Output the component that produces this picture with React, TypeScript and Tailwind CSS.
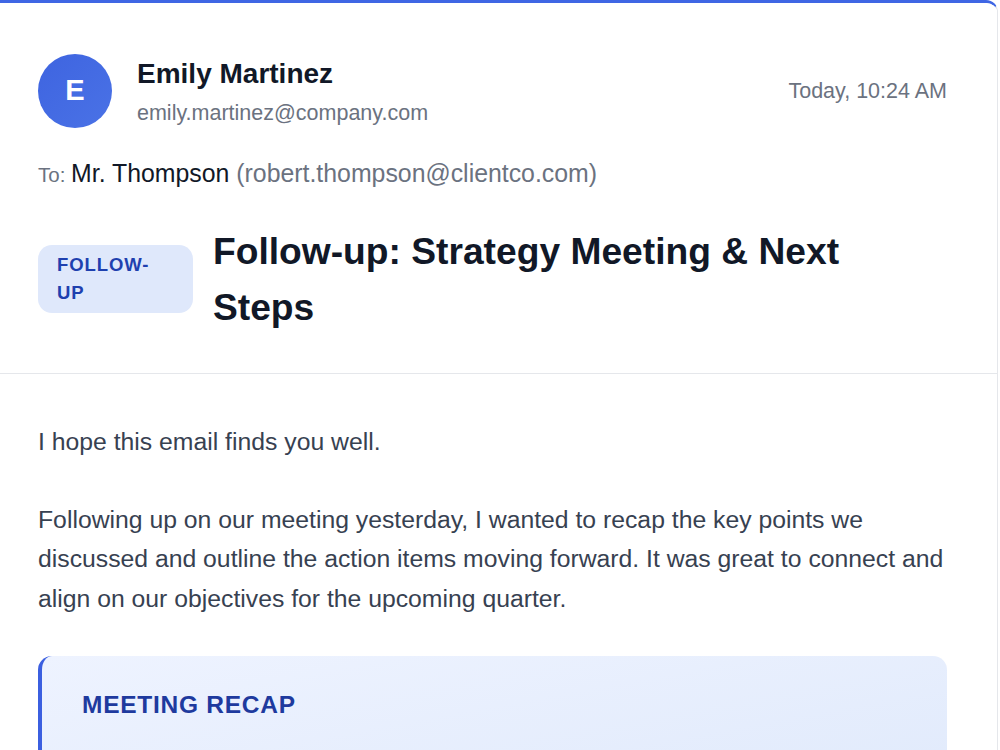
const font = { fontFamily: '"Liberation Sans", Arial, Helvetica, sans-serif' };

function Avatar({ letter }: { letter: string }) {
  return (
    <div className="w-[74px] h-[74px] shrink-0 rounded-full bg-gradient-to-br from-[#3e64e0] to-[#4a72e6] flex items-center justify-center text-white text-[29px] font-bold">
      {letter}
    </div>
  );
}

export default function App() {
  return (
    <div className="min-h-screen bg-white" style={font}>
      <div className="w-[998px] border-t-[3px] border-[#3f66e4] border-r border-r-[#e5e7eb] rounded-tr-xl overflow-hidden">
        {/* Header: sender, recipient, subject */}
        <div className="pl-[38px] pr-[50px] pt-[51px] pb-[38px] border-b border-[#e5e7eb] bg-white">
          <div className="flex items-start gap-[25px]">
            <Avatar letter="E" />
            <div className="flex-1 pt-[3px]">
              <div className="text-[28px] font-bold text-[#111827] leading-[34px]">Emily Martinez</div>
              <div className="text-[21.5px] text-[#6b7280] mt-[8px] leading-[28px]">emily.martinez@company.com</div>
            </div>
            <div className="text-[21.5px] text-[#6b7280] pt-[23px] leading-[28px]">Today, 10:24 AM</div>
          </div>

          <div className="mt-[29px] text-[24.85px] text-[#111827] leading-[34px]">
            <span className="text-[20.5px] text-[#6b7280]">To: </span>
            Mr. Thompson{" "}
            <span className="text-[#6b7280]">(robert.thompson@clientco.com)</span>
          </div>

          <div className="mt-[31px] flex items-center gap-[20px]">
            <span className="w-[155px] shrink-0 rounded-[14px] bg-[#dfe8fb] px-[19px] py-[6px] text-[18.5px] font-bold tracking-[0.05em] leading-[28px] text-[#1e40af]">
              FOLLOW-UP
            </span>
            <h1 className="text-[37.2px] font-bold text-[#111827] leading-[56px] max-w-[690px]">
              Follow-up: Strategy Meeting &amp; Next Steps
            </h1>
          </div>
        </div>

        {/* Message body */}
        <div className="px-[38px] pt-[48px] bg-white text-[24.75px] text-[#374151] leading-[39.5px]">
          <p>I hope this email finds you well.</p>
          <p className="mt-[38px] w-[909px]">
            Following up on our meeting yesterday, I wanted to recap the key points we discussed and outline the action items moving forward. It was great to connect and align on our objectives for the upcoming quarter.
          </p>

          <div className="mt-[38px] w-[909px] rounded-[14px] border-l-4 border-[#3b5fe0] bg-gradient-to-br from-[#eef3ff] to-[#dfe9fb] px-[40px] pt-[33px] pb-[40px]">
            <h2 className="text-[24.5px] font-bold tracking-[0.03em] text-[#1e3a9e] leading-[32px]">MEETING RECAP</h2>
            <div className="h-[60px]" />
          </div>
        </div>
      </div>
    </div>
  );
}
